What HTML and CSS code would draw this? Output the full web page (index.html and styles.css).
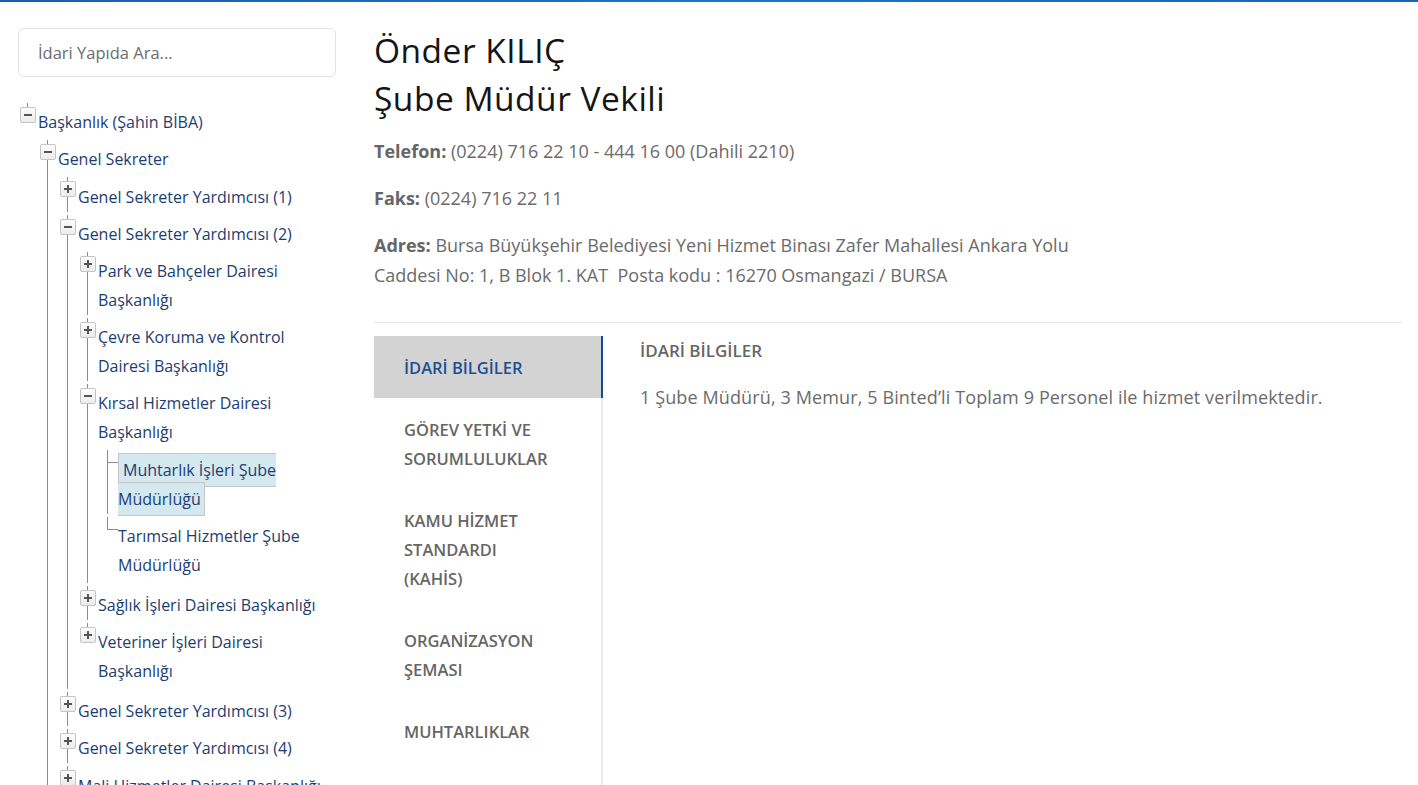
FILE: index.html
```html
<!DOCTYPE html>
<html lang="tr">
<head>
    <meta charset="UTF-8">
    <meta name="viewport" content="width=device-width, initial-scale=1.0">
    <title>Önder KILIÇ - Şube Müdür Vekili</title>
    <link rel="stylesheet" href="styles.css">
</head>
<body>

    <!-- Top line -->
    <div class="top-line"></div>

    <div class="page">

        <!-- Sidebar: search + org tree -->
        <aside class="sidebar">
            <input type="text" class="search" placeholder="İdari Yapıda Ara...">

            <ul class="tree">
                <li><span class="toggle minus"></span><a href="#">Başkanlık (Şahin BİBA)</a>
                    <ul>
                        <li><span class="toggle minus"></span><a href="#">Genel Sekreter</a>
                            <ul>
                                <li><span class="toggle plus"></span><a href="#">Genel Sekreter Yardımcısı (1)</a></li>
                                <li><span class="toggle minus"></span><a href="#">Genel Sekreter Yardımcısı (2)</a>
                                    <ul>
                                        <li><span class="toggle plus"></span><a href="#">Park ve Bahçeler Dairesi Başkanlığı</a></li>
                                        <li><span class="toggle plus"></span><a href="#">Çevre Koruma ve Kontrol Dairesi Başkanlığı</a></li>
                                        <li><span class="toggle minus"></span><a href="#">Kırsal Hizmetler Dairesi Başkanlığı</a>
                                            <ul>
                                                <li class="leaf"><a href="#" class="selected">Muhtarlık İşleri Şube Müdürlüğü</a></li>
                                                <li class="leaf"><a href="#">Tarımsal Hizmetler Şube Müdürlüğü</a></li>
                                            </ul>
                                        </li>
                                        <li><span class="toggle plus"></span><a href="#">Sağlık İşleri Dairesi Başkanlığı</a></li>
                                        <li><span class="toggle plus"></span><a href="#">Veteriner İşleri Dairesi Başkanlığı</a></li>
                                    </ul>
                                </li>
                                <li><span class="toggle plus"></span><a href="#">Genel Sekreter Yardımcısı (3)</a></li>
                                <li><span class="toggle plus"></span><a href="#">Genel Sekreter Yardımcısı (4)</a></li>
                                <li><span class="toggle plus"></span><a href="#">Mali Hizmetler Dairesi Başkanlığı</a></li>
                                <li><span class="toggle plus"></span><a href="#">Destek Hizmetleri Dairesi Başkanlığı</a></li>
                            </ul>
                        </li>
                        <li><span class="toggle plus"></span><a href="#">Teftiş Kurulu Başkanlığı</a></li>
                    </ul>
                </li>
            </ul>
        </aside>

        <!-- Main content -->
        <main class="content">
            <h1 class="person">Önder KILIÇ<br>Şube Müdür Vekili</h1>

            <p class="info"><b>Telefon:</b> (0224) 716 22 10 - 444 16 00 (Dahili 2210)</p>
            <p class="info"><b>Faks:</b> (0224) 716 22 11</p>
            <p class="info"><b>Adres:</b> Bursa Büyükşehir Belediyesi Yeni Hizmet Binası Zafer Mahallesi Ankara Yolu<br>Caddesi No: 1, B Blok 1. KAT &nbsp;Posta kodu : 16270 Osmangazi / BURSA</p>

            <hr class="divider">

            <!-- Tabs -->
            <div class="tabs">
                <ul class="tab-list">
                    <li class="active"><a href="#">İDARİ BİLGİLER</a></li>
                    <li><a href="#">GÖREV YETKİ VE SORUMLULUKLAR</a></li>
                    <li><a href="#">KAMU HİZMET STANDARDI (KAHİS)</a></li>
                    <li><a href="#">ORGANİZASYON ŞEMASI</a></li>
                    <li><a href="#">MUHTARLIKLAR</a></li>
                    <li><a href="#">İLETİŞİM</a></li>
                </ul>

                <div class="tab-pane">
                    <h4>İDARİ BİLGİLER</h4>
                    <p>1 Şube Müdürü, 3 Memur, 5 Binted’li Toplam 9 Personel ile hizmet verilmektedir.</p>
                </div>
            </div>
        </main>

    </div>

</body>
</html>
```

FILE: styles.css
```css
/* Base */
body {
    margin: 0;
    padding: 0;
    font-family: 'Open Sans', 'Noto Sans', sans-serif;
    color: #666;
    background-color: #fff;
    overflow: hidden;
}

a {
    text-decoration: none;
}

/* Thin blue line on top */
.top-line {
    height: 2px;
    background: linear-gradient(90deg, #1b5fa6, #1f74c0 50%, #1a66b0);
}

/* Page layout */
.page {
    display: grid;
    grid-template-columns: 318px 1fr;
    column-gap: 38px;
    padding: 24px 16px 0 18px;
}

/* Search */
.search {
    display: block;
    box-sizing: border-box;
    width: 100%;
    height: 49px;
    margin-top: 2px;
    padding: 0 19px;
    border: 1px solid #e3e3e3;
    border-radius: 6px;
    font-family: inherit;
    font-size: 16.5px;
    color: #555;
    outline: none;
}

.search::placeholder {
    color: #6c6c6c;
}

/* Tree */
.tree,
.tree ul {
    list-style: none;
    margin: 0;
}

.tree {
    margin-top: 23px;
    padding-left: 2px;
}

.tree ul {
    padding: 0 0 3px 2px;
}

.tree li {
    position: relative;
    padding: 8.2px 0 0 18px;
    font-size: 16px;
    line-height: 29px;
}

.tree li a {
    color: #1d3d72;
}

/* vertical line */
.tree li::before {
    content: '';
    position: absolute;
    left: 7px;
    top: 3px;
    bottom: 0;
    border-left: 1px solid #8c8c8c;
}

.tree li:last-child::before {
    bottom: auto;
    height: 4px;
}

/* leaf connector */
.tree li.leaf:last-child::before {
    height: 12px;
}

.tree li.leaf::after {
    content: '';
    position: absolute;
    left: 7px;
    top: 15px;
    width: 11px;
    border-top: 1px solid #8c8c8c;
}

/* plus / minus boxes */
.toggle {
    position: absolute;
    left: 0;
    top: 7px;
    width: 14px;
    height: 14px;
    border: 1px solid #c4c4c4;
    border-radius: 2px;
    background: linear-gradient(#fdfdfd, #ececec);
    z-index: 1;
}

.toggle::before,
.toggle::after {
    content: '';
    position: absolute;
    background-color: #555;
}

.toggle::before {
    left: 3px;
    top: 6px;
    width: 8px;
    height: 2px;
}

.toggle.plus::after {
    left: 6px;
    top: 3px;
    width: 2px;
    height: 8px;
}

.tree a.selected {
    background-color: #d4e8ef;
    border: 1px solid #c6c6c6;
    padding: 5px 3px 5px 4px;
}

/* Person heading */
.person {
    margin: 0 0 14px 0;
    font-size: 33.5px;
    font-weight: 500;
    line-height: 48px;
    letter-spacing: 0.5px;
    color: #151515;
}

.info {
    margin: 0 0 17px 0;
    font-size: 18px;
    line-height: 30px;
    color: #6b6b6b;
}

.info b {
    font-weight: 700;
    color: #666;
}

.divider {
    border: 0;
    border-top: 1px solid #e6e6e6;
    margin: 32px 0 13px 0;
}

/* Tabs */
.tabs {
    display: flex;
}

.tab-list {
    list-style: none;
    margin: 0;
    padding: 0;
    width: 227px;
    flex-shrink: 0;
    border-right: 2px solid #e8e8ee;
}

.tab-list li {
    margin-right: -2px;
}

.tab-list li a {
    display: block;
    padding: 16.5px 48px 16.5px 30px;
    font-size: 16.5px;
    font-weight: 600;
    line-height: 29px;
    color: #666;
}

.tab-list li.active a {
    background-color: #d3d3d3;
    border-right: 2px solid #0d4c98;
    color: #1b4f91;
}

.tab-pane {
    padding-left: 37px;
}

.tab-pane h4 {
    margin: 0 0 17px 0;
    font-size: 17px;
    font-weight: 600;
    line-height: 29px;
    color: #666;
}

.tab-pane p {
    margin: 0;
    font-size: 18px;
    line-height: 30px;
    letter-spacing: 0.12px;
    color: #6b6b6b;
}
```
